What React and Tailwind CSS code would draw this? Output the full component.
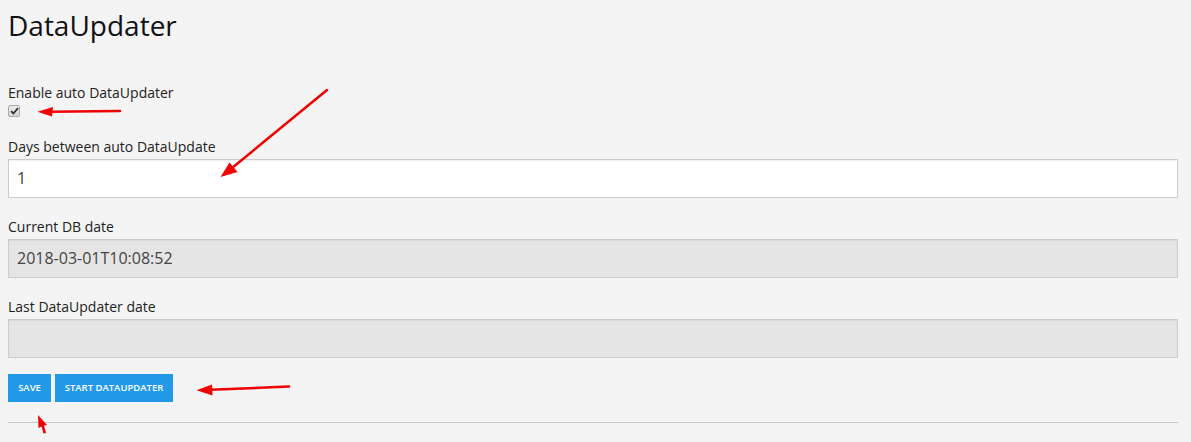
import React from 'react';

// Campo de formulario con etiqueta
const Field = ({ label, value, disabled, className = '' }) => (
  <div className={className}>
    <label className="block text-[14px] leading-[20px] text-[#222]">{label}</label>
    <input
      type="text"
      readOnly
      value={value}
      className={`mt-[2px] block w-full h-[39px] px-[8px] border border-[#cccccc] text-[16px] text-[#444] outline-none shadow-[inset_0_1px_1px_rgba(0,0,0,0.06)] ${
        disabled ? 'bg-[#e5e5e5]' : 'bg-white'
      }`}
    />
  </div>
);

const Annotations = () => (
  <svg className="absolute inset-0 pointer-events-none" width="1191" height="442" viewBox="0 0 1191 442">
    <g stroke="#f00000" strokeWidth="2.5" strokeLinecap="round" fill="#f00000">
      <line x1="120" y1="111" x2="50" y2="111.8" />
      <line x1="327" y1="90" x2="232" y2="168" />
      <line x1="289" y1="386.5" x2="210" y2="389.8" />
    </g>
    <g fill="#f00000">
      <polygon points="37.5,111.8 53,107 52,116.5" />
      <polygon points="220.5,177 229.5,162.5 237.5,172" />
      <polygon points="196.5,390.3 212,384.5 212.5,395.5" />
      <polygon points="38,415 47,425 44,425.5 46,433 43.5,433.5 41.5,426.5 38.5,428" />
    </g>
  </svg>
);

const App = () => {
  return (
    <div className="relative w-[1191px] h-[442px] bg-[#f4f4f4] overflow-hidden font-['Open_Sans',sans-serif] text-[#222]">
      <div className="px-[8px] w-[1186px]">
        <h1 className="pt-[10px] text-[28px] leading-[30.8px] font-normal text-[#111]">DataUpdater</h1>

        <div className="mt-[42px]">
          <label className="block text-[14px] leading-[20px]">Enable auto DataUpdater</label>
          <div className="mt-[2px] w-[12px] h-[12px] border border-[#a9a9a9] rounded-[2px] bg-gradient-to-b from-[#ececec] to-[#d6d6d6] flex items-center justify-center">
            <svg width="9" height="8" viewBox="0 0 9 8">
              <path d="M1 4.2 L3.4 6.5 L8 1.2" stroke="#333" strokeWidth="1.8" fill="none" />
            </svg>
          </div>
        </div>

        <Field className="mt-[20px]" label="Days between auto DataUpdate" value="1" />
        <Field className="mt-[19px]" label="Current DB date" value="2018-03-01T10:08:52" disabled />
        <Field className="mt-[19px]" label="Last DataUpdater date" value="" disabled />

        <div className="mt-[16px] flex gap-[4px]">
          <button className="h-[28px] w-[43px] bg-[#2299e9] text-white text-[9.5px] font-semibold">SAVE</button>
          <button className="h-[28px] w-[118px] bg-[#2299e9] text-white text-[9.5px] font-semibold">START DATAUPDATER</button>
        </div>

        <hr className="mt-[20px] border-0 border-t border-[#c6c6c6]" />
      </div>
      <Annotations />
    </div>
  );
};

export default App;
